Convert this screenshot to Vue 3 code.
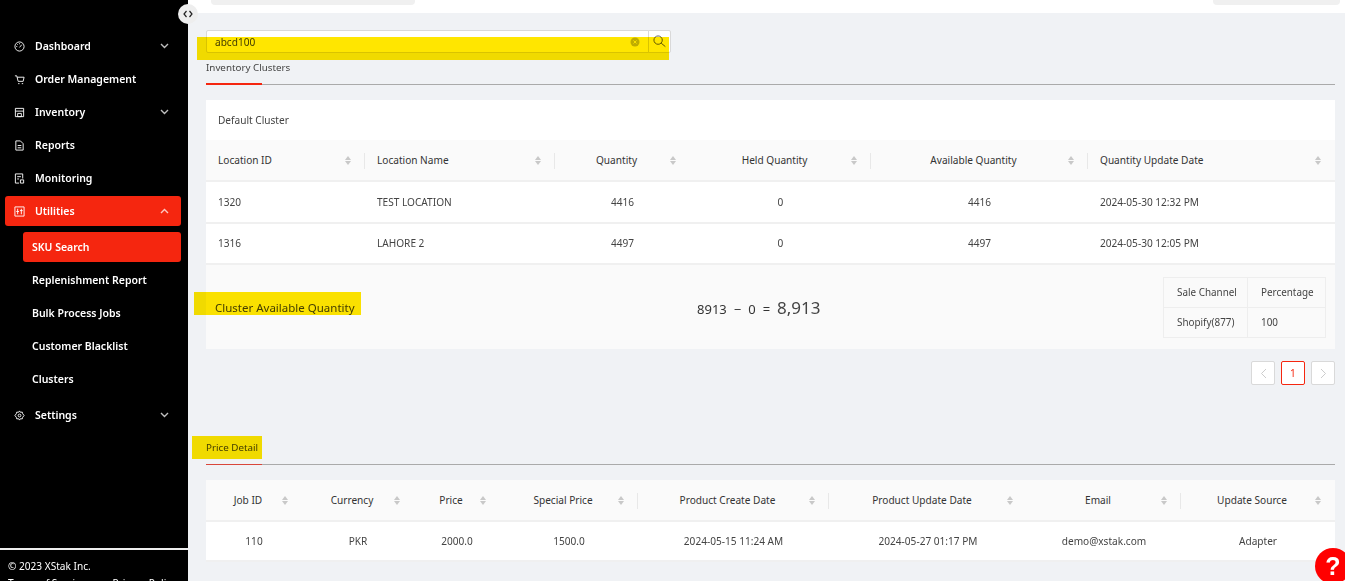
<template>
  <div class="app">
    <aside class="sidebar">
      <button class="collapse">
        <svg width="10" height="8" viewBox="0 0 10 8"><path d="M3.500 1 1 4l2.500 3M6.500 1 9 4 6.500 7" fill="none" stroke="#222" stroke-width="1.200"/></svg>
      </button>
      <nav class="menu">
        <div v-for="item in menu" :key="item.label">
          <div class="menu-item" :class="{ active: item.active }">
            <svg class="menu-icon" width="11" height="11" viewBox="0 0 12 12" fill="none" stroke="#fff" stroke-width="1">
              <path v-for="d in item.icon" :key="d" :d="d" />
            </svg>
            <span class="menu-label">{{ item.label }}</span>
            <svg v-if="item.arrow" class="menu-arrow" width="9" height="6" viewBox="0 0 9 6">
              <path :d="item.arrow === 'up' ? 'M1 5l3.500-3.500L8 5' : 'M1 1l3.500 3.500L8 1'" fill="none" stroke="#fff" stroke-opacity=".75" stroke-width="1.400"/>
            </svg>
          </div>
          <div v-if="item.children" class="submenu">
            <div v-for="child in item.children" :key="child.label" class="sub-item" :class="{ active: child.active }">{{ child.label }}</div>
          </div>
        </div>
      </nav>
      <footer class="side-footer">
        <div>© 2023 XStak Inc.</div>
        <div class="side-links"><span>Terms of Service</span><span>Privacy Policy</span></div>
      </footer>
    </aside>

    <main class="main">
      <header class="topbar">
        <div class="top-pill left"></div>
        <div class="top-pill right"></div>
      </header>

      <section class="content">
        <div class="search">
          <div class="search-input">
            <span>abcd100</span>
            <svg class="clear" width="10" height="10" viewBox="0 0 10 10">
              <circle cx="5" cy="5" r="4.500" fill="#bfbfbf"/>
              <path d="M3.500 3.500l3 3M6.500 3.500l-3 3" stroke="#fff" stroke-width=".9"/>
            </svg>
          </div>
          <button class="search-btn">
            <svg width="13" height="13" viewBox="0 0 14 14" fill="none" stroke="#555" stroke-width="1">
              <circle cx="5.500" cy="5.500" r="4.500"/>
              <path d="M8.800 8.800l4.500 3.700"/>
            </svg>
          </button>
          <div class="marker marker-search"></div>
        </div>

        <div class="tabs">
          <span class="tab">Inventory Clusters</span>
        </div>

        <div class="card">
          <div class="card-title">Default Cluster</div>
          <table class="grid">
            <colgroup><col v-for="c in clusterCols" :key="c.title" :style="{ width: c.width + 'px' }"></colgroup>
            <thead>
              <tr>
                <th v-for="c in clusterCols" :key="c.title" :class="{ divider: c.divider }">
                  <div class="th-inner" :class="{ centered: c.center }">
                    <span class="th-title">{{ c.title }}</span>
                    <span class="sorter"><i class="up"></i><i class="down"></i></span>
                  </div>
                </th>
              </tr>
            </thead>
            <tbody>
              <tr v-for="row in clusterRows" :key="row[0]">
                <td v-for="(val, i) in row" :key="i" :class="{ center: clusterCols[i].center }">{{ val }}</td>
              </tr>
            </tbody>
          </table>
          <div class="summary">
            <div class="summary-label">Cluster Available Quantity<div class="marker marker-label"></div></div>
            <div class="summary-calc">
              <span>8913</span><span class="op">−</span><span>0</span><span class="op">=</span><span class="total">8,913</span>
            </div>
            <table class="channels">
              <colgroup><col class="channel-col"><col class="percent-col"></colgroup>
              <tbody>
                <tr><td>Sale Channel</td><td>Percentage</td></tr>
                <tr><td>Shopify(877)</td><td>100</td></tr>
              </tbody>
            </table>
          </div>
        </div>

        <div class="pager">
          <button class="page-btn"><svg width="7" height="11" viewBox="0 0 7 11"><path d="M6 1 1.500 5.500 6 10" fill="none" stroke="#ccc"/></svg></button>
          <button class="page-btn current">1</button>
          <button class="page-btn"><svg width="7" height="11" viewBox="0 0 7 11"><path d="M1 1l4.500 4.500L1 10" fill="none" stroke="#ccc"/></svg></button>
        </div>

        <div class="tabs price-tabs">
          <span class="tab dim">Price Detail<div class="marker marker-price"></div></span>
        </div>

        <table class="grid price">
          <colgroup><col v-for="c in priceCols" :key="c.title" :style="{ width: c.width + 'px' }"></colgroup>
          <thead>
            <tr>
              <th v-for="c in priceCols" :key="c.title" :class="{ divider: c.divider }">
                <div class="th-inner centered">
                  <span class="th-title">{{ c.title }}</span>
                  <span class="sorter"><i class="up"></i><i class="down"></i></span>
                </div>
              </th>
            </tr>
          </thead>
          <tbody>
            <tr><td v-for="val in priceRow" :key="val" class="center">{{ val }}</td></tr>
          </tbody>
        </table>
      </section>

      <button class="help">?</button>
    </main>
  </div>
</template>

<script setup>
const menu = [
  { label: 'Dashboard', arrow: 'down', icon: ['M6 1a5 5 0 1 1 0 10A5 5 0 0 1 6 1z', 'M6 7l2.500-3', 'M2.500 6h1M3.500 3.500l.7.7M6 2.500v1'] },
  { label: 'Order Management', icon: ['M1 2h2l1.500 6h5.500l1-4.500H3.500', 'M4.500 10.500h1.500M8.500 10.500h1.500'] },
  { label: 'Inventory', arrow: 'down', icon: ['M1.500 1.500h9v9h-9z', 'M1.500 4.500h9', 'M4 7h4v3.500H4z'] },
  { label: 'Reports', icon: ['M2 1h5l3 3v7H2z', 'M4 6h4M4 8.500h4'] },
  { label: 'Monitoring', icon: ['M9.500 6V1h-8v10h4', 'M3.500 4h4M3.500 6.500h2', 'M7 7.500h3.500V11H7z'] },
  {
    label: 'Utilities',
    arrow: 'up',
    active: true,
    icon: ['M1 1h10v10H1z', 'M4 3v6M8 3v6M2.500 6h3M6.500 5h3'],
    children: [
      { label: 'SKU Search', active: true },
      { label: 'Replenishment Report' },
      { label: 'Bulk Process Jobs' },
      { label: 'Customer Blacklist' },
      { label: 'Clusters' }
    ]
  },
  { label: 'Settings', arrow: 'down', icon: ['M6 1l1 1.500 2-.2.500 1.800L11 6l-1.500 1.900-.5 1.800-2-.2L6 11l-1-1.500-2 .2-.5-1.800L1 6l1.500-1.900.5-1.800 2 .2z', 'M7.500 6a1.500 1.500 0 1 1-3 0 1.500 1.500 0 0 1 3 0z'] }
]

const clusterCols = [
  { title: 'Location ID', width: 159 },
  { title: 'Location Name', width: 190, divider: true },
  { title: 'Quantity', width: 135, center: true, divider: true },
  { title: 'Held Quantity', width: 181, center: true },
  { title: 'Available Quantity', width: 217, center: true, divider: true },
  { title: 'Quantity Update Date', width: 247, divider: true }
]

const clusterRows = [
  ['1320', 'TEST LOCATION', '4416', '0', '4416', '2024-05-30 12:32 PM'],
  ['1316', 'LAHORE 2', '4497', '0', '4497', '2024-05-30 12:05 PM']
]

const priceCols = [
  { title: 'Job ID', width: 96 },
  { title: 'Currency', width: 112 },
  { title: 'Price', width: 86 },
  { title: 'Special Price', width: 138 },
  { title: 'Product Create Date', width: 191, divider: true },
  { title: 'Product Update Date', width: 198, divider: true },
  { title: 'Email', width: 154 },
  { title: 'Update Source', width: 154, divider: true }
]

const priceRow = ['110', 'PKR', '2000.0', '1500.0', '2024-05-15 11:24 AM', '2024-05-27 01:17 PM', 'demo@xstak.com', 'Adapter']
</script>

<style>
html, body {
  margin: 0;
  height: 100%;
  overflow: hidden;
  background: #f0f2f5;
}
</style>

<style scoped>
.app {
  display: flex;
  height: 581px;
  overflow: hidden;
  font-family: "Noto Sans", "Open Sans", sans-serif;
  font-size: 10.1px;
  color: #444;
}

.sidebar {
  position: relative;
  z-index: 1;
  flex: 0 0 188px;
  display: flex;
  flex-direction: column;
  background: #000;
  color: #fff;
}

.collapse {
  position: absolute;
  top: 4px;
  right: -10px;
  width: 20px;
  height: 20px;
  padding: 0;
  display: flex;
  align-items: center;
  justify-content: center;
  border: 0;
  border-radius: 50%;
  background: #eee;
}

.menu {
  flex: 1;
  padding: 31px 7px 0 5px;
}

.menu-item {
  display: flex;
  align-items: center;
  height: 30px;
  margin-bottom: 3px;
  padding-left: 9px;
  padding-right: 12px;
  border-radius: 3px;
  font-weight: 600;
  font-size: 10.5px;
}

.menu-item.active {
  background: #f5260f;
}

.menu-icon {
  margin-right: 10px;
  flex: none;
}

.menu-label {
  flex: 1;
}

.submenu {
  padding: 3px 0 3px 18px;
}

.sub-item {
  display: flex;
  align-items: center;
  height: 30px;
  margin-bottom: 3px;
  padding-left: 9px;
  border-radius: 3px;
  font-weight: 600;
  font-size: 10.5px;
}

.sub-item.active {
  background: #f5260f;
}

.side-footer {
  flex: 0 0 33px;
  min-height: 0;
  box-sizing: border-box;
  border-top: 2px solid #eee;
  padding: 8px 8px 0;
  line-height: 17px;
}

.side-links {
  display: flex;
  gap: 27px;
  white-space: nowrap;
}

.main {
  position: relative;
  flex: 1;
  min-width: 0;
  display: flex;
  flex-direction: column;
}

.topbar {
  display: flex;
  justify-content: space-between;
  flex: 0 0 13px;
  padding: 0 5px 0 23px;
  background: #fff;
}

.top-pill {
  height: 5px;
  background: #f0f0f0;
  border-radius: 0 0 4px 4px;
}

.top-pill.left {
  width: 204px;
}

.top-pill.right {
  width: 127px;
}

.content {
  padding: 17px 10px 0 18px;
}

.search {
  position: relative;
  display: flex;
  width: 465px;
  height: 23px;
}

.search-input {
  flex: 1;
  display: flex;
  align-items: center;
  justify-content: space-between;
  padding: 0 8px;
  background: #fff;
  border: 1px solid #d9d9d9;
  border-radius: 2px 0 0 2px;
}

.search-btn {
  width: 23px;
  padding: 0;
  margin-left: -1px;
  display: flex;
  align-items: center;
  justify-content: center;
  background: #fff;
  border: 1px solid #d9d9d9;
  border-radius: 0 2px 2px 0;
}

.marker {
  position: absolute;
  background: #ffe600;
  mix-blend-mode: multiply;
  pointer-events: none;
}

.marker-search {
  left: -9px;
  top: 7px;
  width: 472px;
  height: 23px;
}

.marker-label {
  left: -21px;
  top: -8px;
  width: 167px;
  height: 23px;
}

.marker-price {
  left: -14px;
  top: 3px;
  width: 70px;
  height: 23px;
}

.tabs {
  height: 32px;
  border-bottom: 1px solid #aaa;
  box-sizing: border-box;
}

.tab {
  position: relative;
  display: inline-block;
  width: 56px;
  height: 32px;
  box-sizing: border-box;
  padding-top: 8px;
  white-space: nowrap;
  border-bottom: 2px solid #f5260f;
  font-size: 9.8px;
  color: #444;
}

.tab.dim {
  border-bottom: 1px solid #d9463a;
}

.card {
  margin-top: 15px;
  background: #fff;
}

.card-title {
  display: flex;
  align-items: center;
  height: 40px;
  padding-left: 12px;
}

.grid {
  width: 100%;
  table-layout: fixed;
  border-collapse: separate;
  border-spacing: 0;
}

.grid th {
  position: relative;
  height: 42px;
  box-sizing: border-box;
  padding: 0 14px 0 12px;
  background: #fafafa;
  border-bottom: 2px solid #f0f0f0;
  font-weight: 400;
  text-align: left;
  color: #333;
}

.grid th.divider::before {
  content: "";
  position: absolute;
  left: -1px;
  top: 13px;
  height: 16px;
  width: 1px;
  background: #e8e8e8;
}

.th-inner {
  display: flex;
  align-items: center;
  justify-content: space-between;
}

.th-title {
  white-space: nowrap;
}

.th-inner.centered .th-title {
  flex: 1;
  text-align: center;
}

.sorter {
  display: flex;
  flex-direction: column;
  gap: 1px;
  margin-left: 4px;
}

.sorter i {
  width: 0;
  height: 0;
  border-left: 3.500px solid transparent;
  border-right: 3.500px solid transparent;
}

.sorter .up {
  border-bottom: 4px solid #c8c8c8;
}

.sorter .down {
  border-top: 4px solid #c8c8c8;
}

.grid td {
  height: 41.500px;
  padding: 0 12px;
  background: #fff;
  border-bottom: 2px solid #f0f0f0;
  box-sizing: border-box;
}

.grid.price td {
  height: 40px;
}

.grid td.center {
  text-align: center;
}

.summary {
  display: flex;
  align-items: center;
  height: 84px;
  padding: 0 9px;
  background: #fafafa;
}

.summary-label {
  position: relative;
  white-space: nowrap;
  font-size: 11.500px;
}

.summary-calc {
  flex: 1;
  display: flex;
  justify-content: center;
  align-items: baseline;
  gap: 7px;
  font-size: 13px;
  color: #333;
}

.summary-calc .total {
  font-size: 17px;
  color: #444;
}

.channels {
  width: 162px;
  table-layout: fixed;
  border-collapse: collapse;
}

.channel-col {
  width: 84px;
}

.percent-col {
  width: 78px;
}

.channels td {
  height: 30px;
  padding: 0 13px;
  border: 1px solid #eee;
  box-sizing: border-box;
  white-space: nowrap;
  font-size: 9.900px;
}

.pager {
  display: flex;
  justify-content: flex-end;
  gap: 6px;
  margin-top: 12px;
  height: 24px;
}

.page-btn {
  width: 24px;
  height: 24px;
  padding: 0;
  display: flex;
  align-items: center;
  justify-content: center;
  background: #fff;
  border: 1px solid #d9d9d9;
  border-radius: 2px;
  font-family: inherit;
  font-size: 10.100px;
}

.page-btn.current {
  border-color: #f5260f;
  color: #f5260f;
}

.price-tabs {
  margin-top: 48px;
}

.price {
  margin-top: 15px;
}

.help {
  position: absolute;
  right: -6px;
  bottom: -3px;
  width: 36px;
  height: 36px;
  padding: 0;
  border: 0;
  border-radius: 50%;
  background: #f00;
  color: #fff;
  font-family: "Liberation Sans", sans-serif;
  font-size: 25px;
  line-height: 36px;
  font-weight: 700;
}
</style>
